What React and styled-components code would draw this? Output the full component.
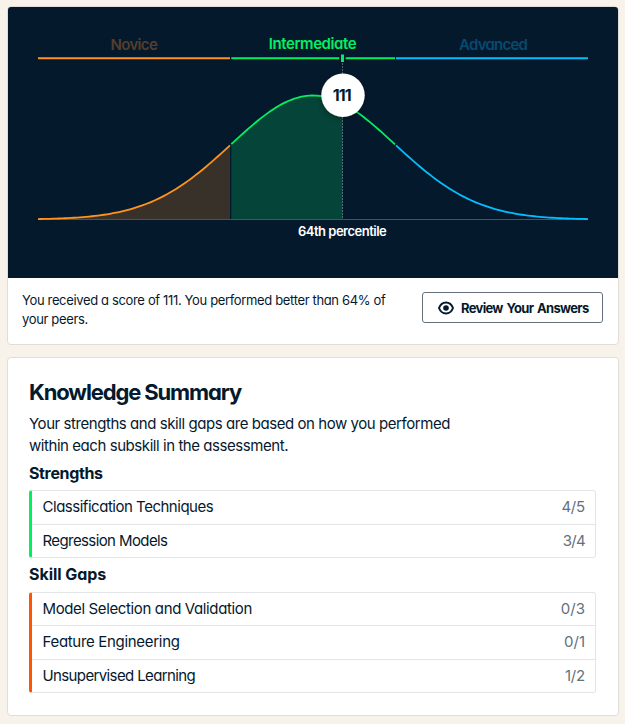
import React from "react";
import styled, { createGlobalStyle } from "styled-components";

const GlobalStyle = createGlobalStyle`
  *, *::before, *::after { box-sizing: border-box; }
  body {
    margin: 0;
    background: #f7f3eb;
    color: #05192d;
    font-family: "Inter", "Liberation Sans", sans-serif;
    font-feature-settings: "cv11";
  }
`;

const Page = styled.main`
  display: flex;
  flex-direction: column;
  gap: 12px;
  width: 625px;
  height: 724px;
  padding: 6px 6px 8px 7px;
`;

const Card = styled.section`
  display: flex;
  flex-direction: column;
  height: ${(p) => p.$height}px;
  background: #fff;
  border: 1px solid #e0ddd6;
  border-radius: 4px;
  overflow: hidden;
`;

const Chart = styled.svg`
  display: block;
  flex: none;
  width: 610px;
  height: 271px;
  background: #05192d;
`;

const Label = styled.text`
  font-size: ${(p) => p.$size || 15}px;
  font-weight: ${(p) => p.$weight || 500};
  letter-spacing: ${(p) => p.$spacing || 0}px;
  fill: ${(p) => p.$color};
`;

const ResultBar = styled.div`
  display: flex;
  justify-content: space-between;
  align-items: flex-start;
  padding: 13px 15px 0 14px;
`;

const ResultText = styled.p`
  margin: 0;
  font-size: 13px;
  line-height: 19px;
  letter-spacing: -0.35px;
  white-space: nowrap;
`;

const ReviewButton = styled.button`
  display: flex;
  align-items: center;
  gap: 7px;
  width: 181px;
  height: 31px;
  margin-top: 1px;
  padding: 0 0 0 15px;
  border: 1px solid #65707c;
  border-radius: 3px;
  background: #fff;
  color: #05192d;
  font: 700 13px "Inter", sans-serif;
  font-feature-settings: "cv11";
  letter-spacing: -0.68px;
  word-spacing: 1.4px;
  white-space: nowrap;
`;

const EyeIcon = styled.svg`
  flex: none;
  width: 16px;
  height: 14px;
`;

const Summary = styled.div`
  display: flex;
  flex-direction: column;
  padding: 20px 22px 0 21px;
`;

const Title = styled.h2`
  margin: 0;
  font-size: 22px;
  font-weight: 700;
  line-height: 28px;
  letter-spacing: -1.13px;
`;

const Lead = styled.p`
  margin: 7px 0 0;
  font-size: 15px;
  line-height: 22px;
  letter-spacing: -0.44px;
  white-space: nowrap;
`;

const GroupTitle = styled.h3`
  margin: 0;
  height: ${(p) => p.$height}px;
  font-size: 16px;
  font-weight: 700;
  line-height: 32px;
  letter-spacing: ${(p) => p.$spacing}px;
`;

const SkillList = styled.ul`
  margin: 0;
  padding: 0;
  list-style: none;
  border: 1px solid #e4e5e7;
  border-left: 3px solid ${(p) => p.$accent};
  border-radius: 3px;
`;

const SkillRow = styled.li`
  display: flex;
  justify-content: space-between;
  align-items: center;
  height: ${(p) => p.$height}px;
  padding: 0 10px 2px 10.5px;
  font-size: 15px;
  letter-spacing: ${(p) => p.$spacing}px;

  & + & { border-top: 1px solid #e4e5e7; }
`;

const SkillScore = styled.span`
  color: #65707c;
  letter-spacing: ${(p) => p.$spacing}px;
`;

const CURVE_TOP = 88.5;
const BASELINE = 212.5;
const MEAN = 305;
const VARIANCE = 6700;

const curveY = (x) =>
  BASELINE - (BASELINE - CURVE_TOP) * Math.exp(-((x - MEAN) ** 2) / (2 * VARIANCE));

const curve = (from, to) => {
  const points = [];
  for (let x = from; x < to; x += 3) points.push(`${x} ${curveY(x).toFixed(2)}`);
  points.push(`${to} ${curveY(to).toFixed(2)}`);
  return `M${points.join("L")}`;
};

const area = (from, to) => `${curve(from, to)}V${BASELINE}H${from}Z`;

const bands = [
  { color: "#ff931e", from: 30, to: 222 },
  { color: "#03ef62", from: 223.3, to: 387 },
  { color: "#06bdfc", from: 388, to: 580 },
];

const groups = [
  {
    title: "Strengths", accent: "#03ef62", titleHeight: 33, spacing: -0.36,
    rows: [
      { name: "Classification Techniques", score: "4/5", height: 33, spacing: -0.48, scoreSpacing: -0.2 },
      { name: "Regression Models", score: "3/4", height: 33, spacing: -0.6, scoreSpacing: -0.7 },
    ],
  },
  {
    title: "Skill Gaps", accent: "#ff5400", titleHeight: 34, spacing: -0.05,
    rows: [
      { name: "Model Selection and Validation", score: "0/3", height: 32, spacing: -0.37, scoreSpacing: 0 },
      { name: "Feature Engineering", score: "0/1", height: 34, spacing: -0.31, scoreSpacing: 0 },
      { name: "Unsupervised Learning", score: "1/2", height: 33, spacing: -0.62, scoreSpacing: -0.2 },
    ],
  },
];

function ScoreChart() {
  return (
    <Chart viewBox="0 0 610 271" role="img" aria-label="Score distribution">
      <defs>
        <filter id="shadow" x="-30%" y="-30%" width="160%" height="160%">
          <feDropShadow dx="0" dy="1" stdDeviation="3" floodColor="#000" floodOpacity=".4" />
        </filter>
      </defs>
      <Label x="102.5" y="43" $color="#563e2b" $spacing={-0.65} $weight={600}>Novice</Label>
      <Label x="260.8" y="42" $color="#03ef62" $weight={600} $spacing={-0.43}>Intermediate</Label>
      <Label x="451" y="43" $color="#064a70" $spacing={-0.75} $weight={600}>Advanced</Label>
      <path d={area(30, 222)} fill="#ff931e" fillOpacity=".2" />
      <path d={area(223.3, 334.5)} fill="#03ef62" fillOpacity=".2" />
      <path d="M30 212.5H580" stroke="#465361" />
      {bands.map((b) => (
        <g key={b.color} stroke={b.color} strokeWidth="2" fill="none">
          <path d={`M${b.from} 51.3H${b.to}`} />
          <path d={curve(b.from, b.to)} strokeWidth="1.8" />
        </g>
      ))}
      <path d="M331.3 51.3H337.7" stroke="#05192d" strokeWidth="4" />
      <path d="M334.5 56V212" stroke="#a0b0b8" strokeOpacity=".5" strokeDasharray="2 1" />
      <path d="M334.5 47.5V55" stroke="#03ef62" strokeWidth="3" />
      <circle cx="335" cy="88.3" r="21.7" fill="#fff" filter="url(#shadow)" />
      <Label x="324.8" y="94" $color="#05192d" $size={16} $weight={700} $spacing={-0.9}>111</Label>
      <Label x="290" y="229" $color="#fff" $size={13} $weight={600} $spacing={-0.5}>64th percentile</Label>
    </Chart>
  );
}

function SkillGroup({ group }) {
  return (
    <>
      <GroupTitle $height={group.titleHeight} $spacing={group.spacing}>{group.title}</GroupTitle>
      <SkillList $accent={group.accent}>
        {group.rows.map((row) => (
          <SkillRow key={row.name} $height={row.height} $spacing={row.spacing}>
            {row.name}
            <SkillScore $spacing={row.scoreSpacing}>{row.score}</SkillScore>
          </SkillRow>
        ))}
      </SkillList>
    </>
  );
}

export default function App() {
  return (
    <>
      <GlobalStyle />
      <Page>
        <Card $height={339}>
          <ScoreChart />
          <ResultBar>
            <ResultText>
              You received a score of 111. You performed better than 64% of<br />your peers.
            </ResultText>
            <ReviewButton>
              <EyeIcon viewBox="0 0 16 14" fill="none">
                <path d="M1 7C2.3 3.6 4.9 1.5 8 1.5S13.7 3.6 15 7C13.7 10.4 11.1 12.5 8 12.5S2.3 10.4 1 7Z" stroke="currentColor" strokeWidth="2" strokeLinejoin="round" />
                <circle cx="8" cy="7" r="2.8" fill="currentColor" />
              </EyeIcon>
              Review Your Answers
            </ReviewButton>
          </ResultBar>
        </Card>
        <Card $height={359}>
          <Summary>
            <Title>Knowledge Summary</Title>
            <Lead>
              Your strengths and skill gaps are based on how you performed<br />within each subskill in the assessment.
            </Lead>
            {groups.map((g) => <SkillGroup key={g.title} group={g} />)}
          </Summary>
        </Card>
      </Page>
    </>
  );
}
